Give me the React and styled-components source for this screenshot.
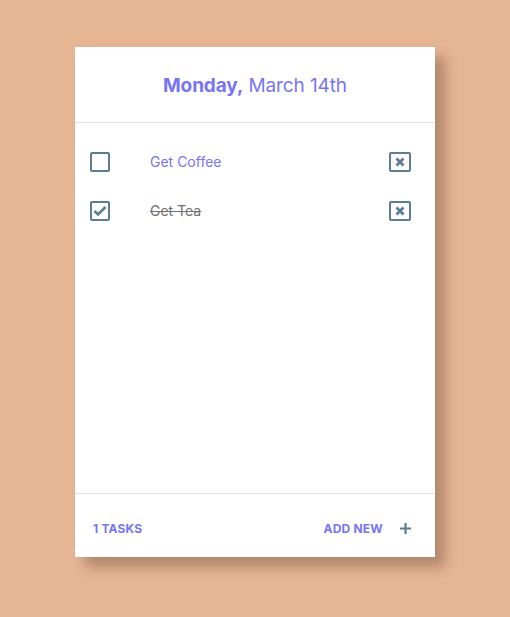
import React, { useState } from "react";
import styled, { createGlobalStyle } from "styled-components";

const Global = createGlobalStyle`
  html, body { margin: 0; padding: 0; }
  body {
    background: #e6b594;
    font-family: Inter, "Noto Sans", sans-serif;
    width: 510px;
    height: 617px;
    overflow: hidden;
  }
`;

const Page = styled.div`
  display: flex;
  justify-content: center;
  padding-top: 47px;
`;

const Card = styled.div`
  width: 360px;
  height: 510px;
  background: #fff;
  box-shadow: 10px 10px 12px rgba(60, 30, 10, 0.3);
  display: flex;
  flex-direction: column;
`;

const Header = styled.div`
  height: 76px;
  border-bottom: 1px solid #e2e2e2;
  display: flex;
  align-items: center;
  justify-content: center;
  padding-top: 1px;
  box-sizing: border-box;
`;

const Title = styled.h1`
  margin: 0;
  font-size: 19px;
  font-weight: 400;
  letter-spacing: -0.1px;
  color: #7874f5;
  b { font-weight: 700; }
`;

const List = styled.div`
  flex: 1;
  padding: 14px 24px 0 15px;
  display: flex;
  flex-direction: column;
`;

const Row = styled.div`
  height: 49px;
  display: flex;
  align-items: center;
`;

const Check = styled.div`
  width: 20px;
  height: 20px;
  box-sizing: border-box;
  border: 2px solid #5a7d8f;
  border-radius: 2px;
  display: flex;
  align-items: center;
  justify-content: center;
  cursor: pointer;
`;

const Label = styled.span`
  margin-left: 40px;
  flex: 1;
  font-size: 14px;
  color: ${(p) => (p.$done ? "#707070" : "#7874f5")};
  text-decoration: ${(p) => (p.$done ? "line-through" : "none")};
`;

const Delete = styled.div`
  width: 22px;
  height: 20px;
  box-sizing: border-box;
  border: 2px solid #5a7d8f;
  border-radius: 2px;
  display: flex;
  align-items: center;
  justify-content: center;
`;

const Footer = styled.div`
  height: 64px;
  border-top: 1px solid #e2e2e2;
  display: flex;
  align-items: center;
  justify-content: space-between;
  padding: 6px 24px 0 18px;
  box-sizing: border-box;
`;

const FootText = styled.span`
  font-size: 12px;
  font-weight: 700;
  color: #7874f5;
  letter-spacing: 0.2px;
`;

const AddNew = styled.div`
  display: flex;
  align-items: center;
  gap: 17px;
`;

const tasks = [
  { name: "Get Coffee", done: false },
  { name: "Get Tea", done: true },
];

export default function App() {
  const [items] = useState(tasks);
  return (
    <>
      <Global />
      <Page>
        <Card>
          <Header>
            <Title>
              <b>Monday,</b> March 14th
            </Title>
          </Header>
          <List>
            {items.map((t) => (
              <Row key={t.name}>
                <Check>
                  {t.done && (
                    <svg width="14" height="12" viewBox="0 0 14 12">
                      <path d="M1.5 6 L5 9.5 L12.5 2" fill="none" stroke="#5a7d8f" strokeWidth="2.6" />
                    </svg>
                  )}
                </Check>
                <Label $done={t.done}>{t.name}</Label>
                <Delete>
                  <svg width="10" height="10" viewBox="0 0 10 10">
                    <path d="M1.5 1.5 L8.5 8.5 M8.5 1.5 L1.5 8.5" stroke="#5a7d8f" strokeWidth="2.8" />
                  </svg>
                </Delete>
              </Row>
            ))}
          </List>
          <Footer>
            <FootText>1 TASKS</FootText>
            <AddNew>
              <FootText>ADD NEW</FootText>
              <svg width="11" height="11" viewBox="0 0 11 11">
                <path d="M5.5 0 V11 M0 5.5 H11" stroke="#5a7d8f" strokeWidth="2.2" />
              </svg>
            </AddNew>
          </Footer>
        </Card>
      </Page>
    </>
  );
}
